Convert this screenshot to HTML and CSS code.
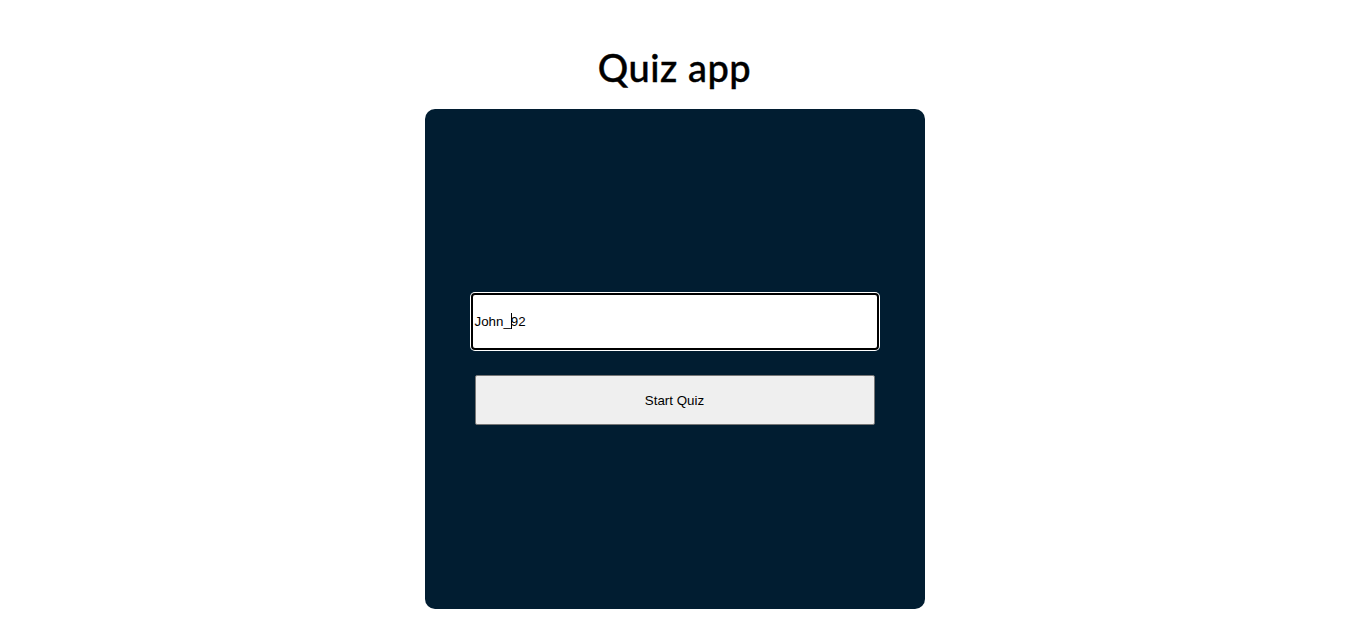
FILE: index.html
```html
<!DOCTYPE html>
<html lang="en">
<head>
<meta charset="utf-8">
<title>Quiz app</title>
<link rel="stylesheet" href="styles.css">
</head>
<body>
<main class="page">
  <h1 class="title">Quiz app</h1>
  <section class="card">
    <div class="form">
      <div class="input-wrap">
        <span class="input-text">John_<span class="caret"></span>92</span>
      </div>
      <button class="start-btn" type="button">Start Quiz</button>
    </div>
  </section>
</main>
</body>
</html>
```

FILE: styles.css
```css
html, body {
  margin: 0;
  padding: 0;
  background: #ffffff;
}

.page {
  display: flex;
  flex-direction: column;
  align-items: center;
  padding-top: 41px;
}

.title {
  margin: 0 0 16px 0;
  font-family: "Lato", "Noto Sans", sans-serif;
  font-weight: 500;
  font-size: 38px;
  line-height: 52px;
  color: #000;
  letter-spacing: 0.5px;
  -webkit-text-stroke: 0.4px #000;
}

.card {
  width: 500px;
  height: 500px;
  background: #011d31;
  border-radius: 10px;
  display: flex;
  align-items: center;
  justify-content: center;
}

.form {
  display: flex;
  flex-direction: column;
  align-items: center;
  gap: 25px;
}

.input-wrap {
  box-sizing: border-box;
  width: 408px;
  height: 57px;
  background: #fff;
  border: 2px solid #000;
  border-radius: 4px;
  box-shadow: 0 0 0 1px #ffffff;
  display: flex;
  align-items: center;
  padding-left: 2px;
  padding-bottom: 1px;
}

.input-text {
  font-family: "Liberation Sans", Arial, sans-serif;
  font-size: 13.333px;
  color: #000;
}

.caret {
  display: inline-block;
  width: 1px;
  height: 16px;
  background: #000;
  vertical-align: -3px;
  margin: 0 -1px 0 0;
}

.start-btn {
  box-sizing: border-box;
  width: 400px;
  height: 50px;
  background: #efefef;
  border: 1px solid #767676;
  border-radius: 2px;
  font-family: "Liberation Sans", Arial, sans-serif;
  font-size: 13.333px;
  color: #000;
  padding: 0;
}
```
